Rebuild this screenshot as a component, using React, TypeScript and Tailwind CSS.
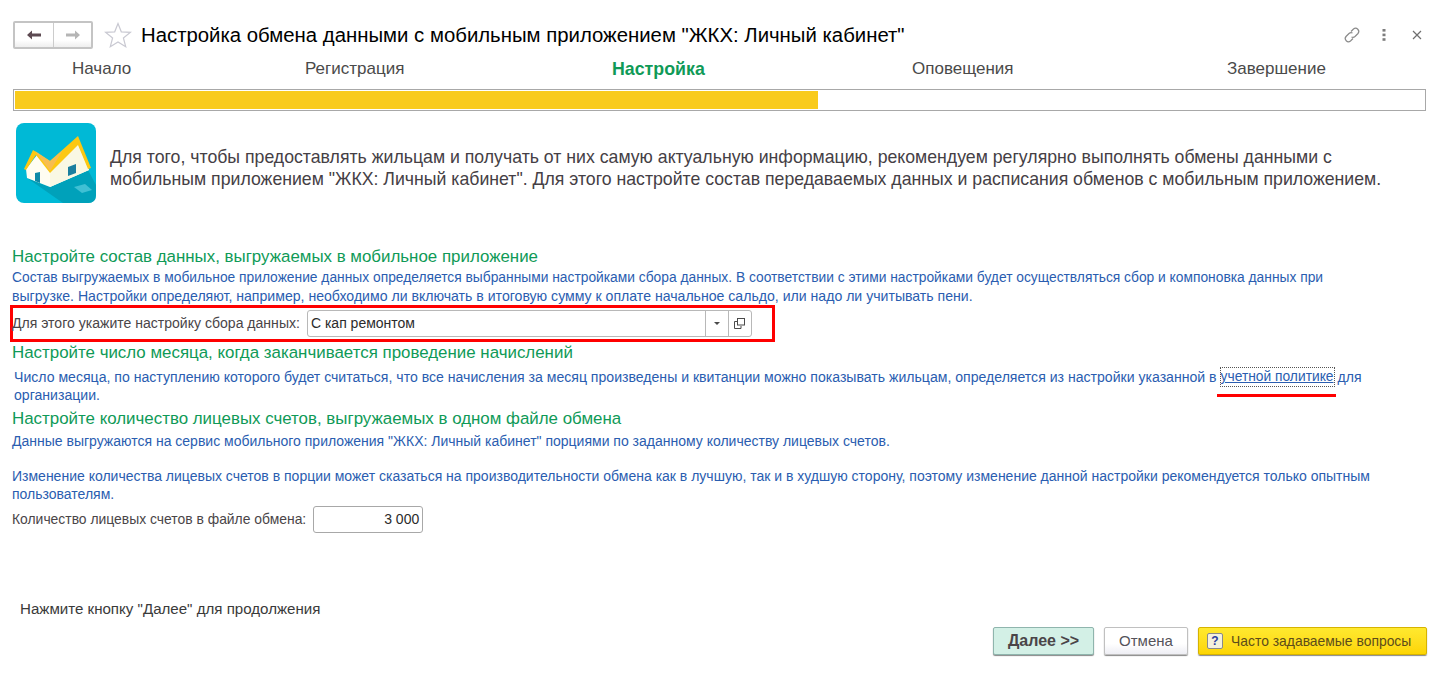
const font = "font-['Liberation_Sans',Arial,sans-serif]";

function HouseLogo() {
    return (
        <svg width="80" height="80" viewBox="0 0 80 80" className="shrink-0">
            <rect width="80" height="80" rx="8" fill="#00b9d6" />
            <path d="M11 55 L47 80 L72 80 Q80 80 80 72 L80 62 L72 47 L34 64 Z" fill="#00a1ba" />
            <path d="M58 64 L69 61 L76 67 L66 70 Z" fill="#3fc0d4" />
            <path d="M10 46 L21 32 L34 48 L62 21 L73 47 L34 64 L11 55 Z" fill="#fffdf2" />
            <path d="M34 48 L62 21 L73 47 L34 64 Z" fill="#f9f8e4" />
            <path d="M52 44 L60 41 L60 50 L52 53 Z" fill="#1a7f9f" />
            <path d="M19 50 L24 49 L24 60 L19 58 Z" fill="#0e89a7" />
            <path d="M8 46 L17 27 L34 38 L62 13 L75 45 L72 46 L62 22 L34 50 L20 32 L10 47 Z" fill="#fcc812" />
            <path d="M19 28 L34 38 L47 27 L34 48 Z" fill="#f7bd50" />
        </svg>
    );
}

function BackForward() {
    return (
        <div className="flex h-[28px] w-[80px] rounded-[2px] border-2 border-[#c4c4c4] bg-gradient-to-b from-white from-70% to-[#eeeeee]">
            <div className="flex w-[39px] items-center justify-center border-r border-[#cccccc]">
                <svg width="16" height="12" viewBox="0 0 16 12"><path d="M1 6 L6 1.5 V4.5 H15 V7.5 H6 V10.5 Z" fill="#5d4a52" /></svg>
            </div>
            <div className="flex flex-1 items-center justify-center">
                <svg width="16" height="12" viewBox="0 0 16 12"><path d="M15 6 L10 1.5 V4.5 H1 V7.5 H10 V10.5 Z" fill="#b5b5b5" /></svg>
            </div>
        </div>
    );
}

function Heading({ children }: { children: string }) {
    return <h2 className="pl-[12px] text-[16.9px] leading-[20px] text-[#0f9a57]">{children}</h2>;
}

export default function App() {
    return (
        <div className={`${font} relative flex h-[681px] w-[1451px] flex-col bg-white text-[#3f3a40]`}>
            <div className="flex h-[47px] items-center pt-[23px] pl-[13px] pr-[29px]">
                <BackForward />
                <svg width="28" height="26" viewBox="0 0 28 26" className="ml-[11px]">
                    <path d="M14 1.5 L17.3 9.8 L26.5 10.3 L19.4 16 L21.7 24.7 L14 19.9 L6.3 24.7 L8.6 16 L1.5 10.3 L10.7 9.8 Z" fill="white" stroke="#c9c9d2" strokeWidth="1.2" />
                </svg>
                <h1 className="ml-[9px] text-[20.35px] leading-[24px] text-black">Настройка обмена данными с мобильным приложением "ЖКХ: Личный кабинет"</h1>
                <div className="ml-auto flex items-center">
                    <svg width="18" height="18" viewBox="0 0 18 18" fill="none" stroke="#8a8a8a" strokeWidth="1.2">
                        <path d="M8 5.5 L10.5 3 A3.2 3.2 0 0 1 15 7.5 L12 10.5 A3.2 3.2 0 0 1 8.5 11" />
                        <path d="M10 12.5 L7.5 15 A3.2 3.2 0 0 1 3 10.5 L6 7.5 A3.2 3.2 0 0 1 9.5 7" />
                    </svg>
                    <svg width="4" height="12" viewBox="0 0 4 12" className="ml-[21px]" fill="#7d7d7d">
                        <rect x="0.5" y="0" width="3" height="2.6" /><rect x="0.5" y="4.6" width="3" height="2.6" /><rect x="0.5" y="9.2" width="3" height="2.6" />
                    </svg>
                    <svg width="10" height="10" viewBox="0 0 10 10" className="ml-[26px]" stroke="#6f6f6f" strokeWidth="1.2"><path d="M1 1 L9 9 M9 1 L1 9" /></svg>
                </div>
            </div>

            <div className="flex h-[32px] items-end pl-[72px] text-[17px] leading-[20px] text-[#4a4a4a]">
                <span className="w-[233px]">Начало</span>
                <span className="w-[307px]">Регистрация</span>
                <span className="w-[300px] text-[17.8px] font-bold text-[#0f9a57]">Настройка</span>
                <span className="w-[315px]">Оповещения</span>
                <span>Завершение</span>
            </div>

            <div className="mx-[13px] mt-[10px] h-[22px] w-[1413px] border border-[#a8a8a8] p-[1px]">
                <div className="h-full w-[803px] bg-[#f9cb1c]" />
            </div>

            <div className="mt-[12px] flex h-[80px] pl-[16px]">
                <HouseLogo />
                <p className="ml-[14px] mt-[23px] w-[1290px] text-[17.7px] leading-[22px] text-[#454045]">
                    Для того, чтобы предоставлять жильцам и получать от них самую актуальную информацию, рекомендуем регулярно выполнять обмены данными с мобильным приложением "ЖКХ: Личный кабинет". Для этого настройте состав передаваемых данных и расписания обменов с мобильным приложением.
                </p>
            </div>

            <div className="mt-[44px]">
                <Heading>Настройте состав данных, выгружаемых в мобильное приложение</Heading>
            </div>
            <div className="mt-[2px] pl-[12px] leading-[18px] text-[#2a5db0]">
                <p className="text-[13.8px]">Состав выгружаемых в мобильное приложение данных определяется выбранными настройками сбора данных. В соответствии с этими настройками будет осуществляться сбор и компоновка данных при</p>
                <p className="text-[14.1px]">выгрузке. Настройки определяют, например, необходимо ли включать в итоговую сумму к оплате начальное сальдо, или надо ли учитывать пени.</p>
            </div>

            <div className="ml-[10px] flex h-[37px] w-[765px] items-center border-[3px] border-[#ff0000]">
                <span className="-ml-[1px] text-[14.05px] text-[#4a4548]">Для этого укажите настройку сбора данных:</span>
                <div className="ml-[7px] flex h-[27px] w-[445px] items-center rounded-[3px] border border-[#b8b8b8] bg-white">
                    <span className="flex-1 pl-[3px] text-[14px] text-[#2b2b2b]">С кап ремонтом</span>
                    <div className="flex h-full w-[23px] items-center justify-center border-l border-[#b8b8b8]">
                        <div className="h-0 w-0 border-x-[3px] border-t-[3px] border-x-transparent border-t-[#4a4a4a]" />
                    </div>
                    <div className="flex h-full w-[23px] items-center justify-center border-l border-[#b8b8b8]">
                        <svg width="11" height="11" viewBox="0 0 11 11" fill="none" stroke="#4a4a4a"><rect x="3.5" y="0.5" width="7" height="6.5" /><path d="M3 3.5 H0.5 V10.5 H7 V8" /></svg>
                    </div>
                </div>
            </div>

            <div className="mt-[1px]">
                <Heading>Настройте число месяца, когда заканчивается проведение начислений</Heading>
            </div>
            <div className="mt-[5px] pl-[14px] text-[14.08px] leading-[18px] text-[#2a5db0]">
                <div className="flex gap-[4px]">
                    <span>Число месяца, по наступлению которого будет считаться, что все начисления за месяц произведены и квитанции можно показывать жильцам, определяется из настройки указанной в</span>
                    <a className="text-[13.8px] underline outline-1 outline-dotted outline-[#555555]">учетной политике</a>
                    <span>для</span>
                </div>
                <p>организации.</p>
            </div>
            <div className="absolute left-[1217px] top-[394px] h-[3px] w-[119px] bg-[#ff0000]" />

            <div className="mt-[5px]">
                <Heading>Настройте количество лицевых счетов, выгружаемых в одном файле обмена</Heading>
            </div>
            <p className="mt-[3px] pl-[12px] text-[14px] leading-[18px] text-[#2a5db0]">
                Данные выгружаются на сервис мобильного приложения "ЖКХ: Личный кабинет" порциями по заданному количеству лицевых счетов.
            </p>
            <p className="mt-[17px] w-[1390px] pl-[12px] text-[14px] leading-[18px] text-[#2a5db0]">
                Изменение количества лицевых счетов в порции может сказаться на производительности обмена как в лучшую, так и в худшую сторону, поэтому изменение данной настройки рекомендуется только опытным пользователям.
            </p>

            <div className="mt-[3px] flex items-center pl-[12px]">
                <span className="text-[13.9px] text-[#4a4548]">Количество лицевых счетов в файле обмена:</span>
                <div className="ml-[7px] flex h-[27px] w-[110px] items-center justify-end rounded-[3px] border border-[#a8a8a8] pr-[3px] text-[14px] text-[#2b2b2b]">3 000</div>
            </div>

            <p className="mt-[67px] pl-[20px] text-[15.1px] leading-[18px] text-[#3a3a3a]">Нажмите кнопку "Далее" для продолжения</p>

            <div className="mt-[9px] flex gap-[10px] pl-[993px]">
                <button className="h-[28px] w-[101px] rounded-[2px] border border-[#8fb5ad] bg-[#d3f0e6] text-[16px] font-bold text-[#4a4548] shadow-[0_1px_1px_#888888]">Далее &gt;&gt;</button>
                <button className="h-[28px] w-[84px] rounded-[2px] border border-[#c0c0c0] bg-gradient-to-b from-white from-60% to-[#eeeef4] text-[15px] text-[#55535a] shadow-[0_1px_1px_#888888]">Отмена</button>
                <button className="flex h-[28px] w-[229px] items-center rounded-[2px] border border-[#d6b300] bg-gradient-to-b from-[#ffe92e] to-[#fdd500] pl-[8px] text-[13.9px] text-[#5c4c1a] shadow-[0_1px_1px_#888888]">
                    <span className="flex h-[16px] w-[16px] items-center justify-center rounded-[2px] border border-[#8a8a8a] bg-[#f4f0dc] text-[12px] font-bold text-[#2a3d9e]">?</span>
                    <span className="ml-[8px]">Часто задаваемые вопросы</span>
                </button>
            </div>
        </div>
    );
}
